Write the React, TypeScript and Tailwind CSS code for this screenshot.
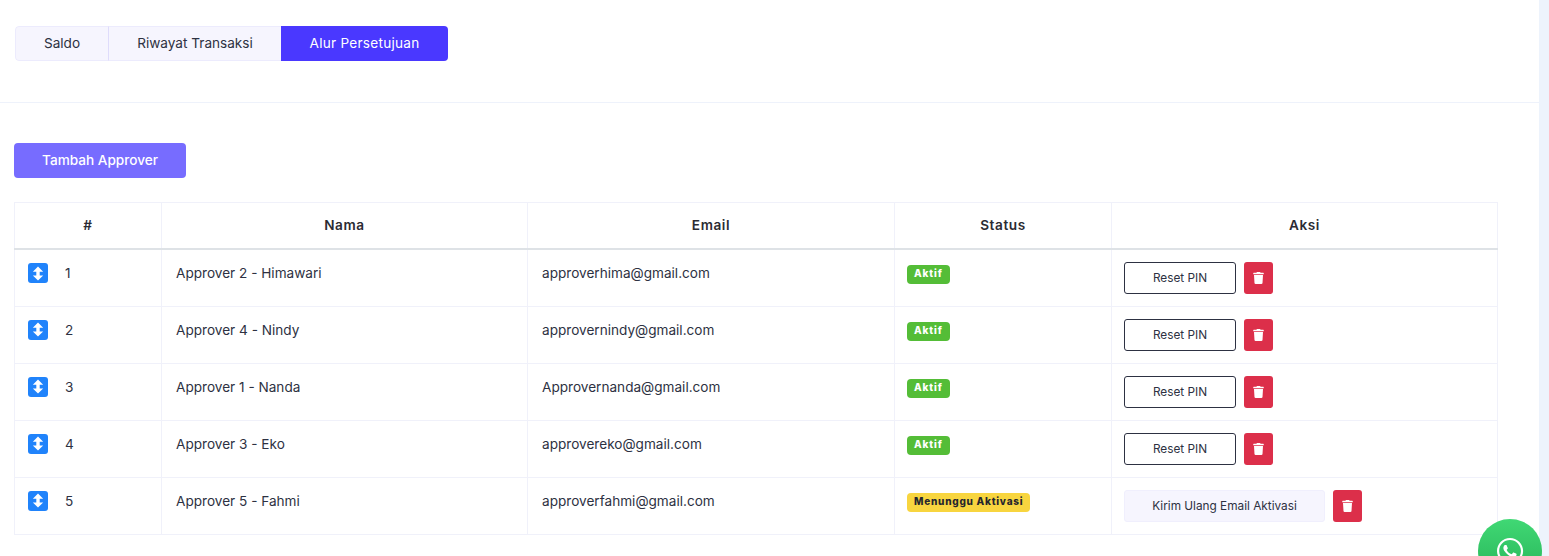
import React from "react"
import { FaWhatsapp, FaTrash } from "react-icons/fa"

const approvers = [
  { no: 1, nama: "Approver 2 - Himawari", email: "approverhima@gmail.com", aktif: true },
  { no: 2, nama: "Approver 4 - Nindy", email: "approvernindy@gmail.com", aktif: true },
  { no: 3, nama: "Approver 1 - Nanda", email: "Approvernanda@gmail.com", aktif: true },
  { no: 4, nama: "Approver 3 - Eko", email: "approvereko@gmail.com", aktif: true },
  { no: 5, nama: "Approver 5 - Fahmi", email: "approverfahmi@gmail.com", aktif: false },
]

const SortHandle = () => (
  <span className="flex h-[20px] w-[20px] items-center justify-center rounded-[3px] bg-[#2083fb]">
    <svg viewBox="0 0 12 16" className="h-[15px] w-[12px]" fill="#fff">
      <path d="M6 0.5 11.5 6H7.8V10H11.5L6 15.5 0.5 10H4.2V6H0.5Z" />
    </svg>
  </span>
)

const DeleteButton = () => (
  <button className="flex h-[32px] w-[29px] items-center justify-center rounded-[3px] bg-[#dc2f4a] text-white">
    <FaTrash className="h-[12px] w-[11px]" />
  </button>
)

export default function App() {
  return (
    <div className="flex h-[556px] w-[1549px] overflow-hidden bg-white font-['Inter',sans-serif] text-[13.6px] text-[#2d3142]">
      <div className="relative w-[1539px] shrink-0">
        <div className="h-[103px] border-b border-[#eef2fb] pl-[15px] pt-[26px]">
          <div className="flex h-[35px] w-fit overflow-hidden rounded-[4px]">
            <button className="w-[93px] rounded-l-[4px] border border-r-0 border-[#ecebfd] bg-[#f6f5fe]">Saldo</button>
            <button className="w-[173px] border border-l-[#dfdcfb] border-r-0 border-y-[#ecebfd] bg-[#f6f5fe]">Riwayat Transaksi</button>
            <button className="w-[167px] bg-[#4a38ff] tracking-[0.25px] text-white">Alur Persetujuan</button>
          </div>
        </div>

        <div className="pl-[14px] pt-[40px]">
          <button className="h-[35px] w-[172px] rounded-[4px] bg-[#776cff] font-medium text-white">Tambah Approver</button>

          <table className="mt-[24px] w-[1484px] table-fixed border-collapse">
            <thead>
              <tr className="h-[46px] border-b-2 border-[#dee2e6] tracking-[0.6px] text-[#2b2b33]">
                <th className="w-[147px] border border-b-0 border-[#f0f1fa] pb-[1px] font-semibold">#</th>
                <th className="w-[366px] border border-b-0 border-[#f0f1fa] pb-[1px] font-semibold">Nama</th>
                <th className="w-[367px] border border-b-0 border-[#f0f1fa] pb-[1px] font-semibold">Email</th>
                <th className="w-[217px] border border-b-0 border-[#f0f1fa] pb-[1px] font-semibold">Status</th>
                <th className="border border-b-0 border-[#f0f1fa] pb-[1px] font-semibold">Aksi</th>
              </tr>
            </thead>
            <tbody>
              {approvers.map((a) => (
                <tr key={a.no} className="h-[57px] first:h-[58px] [&:first-child>td]:pt-[1px]">
                  <td className="border border-[#f0f1fa] pl-[13px] pb-[10px] align-middle">
                    <div className="flex items-center gap-[17px]">
                      <SortHandle />
                      <span>{a.no}</span>
                    </div>
                  </td>
                  <td className="border border-[#f0f1fa] pl-[14px] pb-[10px]">{a.nama}</td>
                  <td className="border border-[#f0f1fa] pl-[14px] pb-[10px]">{a.email}</td>
                  <td className="border border-[#f0f1fa] pl-[12px] pb-[11px]">
                    {a.aktif ? (
                      <span className="inline-block h-[19px] rounded-[4px] bg-[#54bd37] px-[7px] text-[10px] font-extrabold leading-[17px] tracking-[0.85px] text-white">Aktif</span>
                    ) : (
                      <span className="inline-block h-[19px] rounded-[4px] bg-[#f8d53f] px-[7px] text-[10px] font-extrabold leading-[17px] tracking-[0.75px] text-[#26262e]">Menunggu Aktivasi</span>
                    )}
                  </td>
                  <td className="border border-[#f0f1fa] pl-[12px]">
                    <div className="flex items-center gap-[8px]">
                      {a.aktif ? (
                        <button className="h-[32px] w-[112px] rounded-[3px] border border-[#2d3142] pt-[1px] text-[11.8px]">Reset PIN</button>
                      ) : (
                        <button className="h-[32px] w-[201px] rounded-[3px] border border-[#f0effd] bg-[#f6f5fe] pt-[1px] text-[11.8px]">Kirim Ulang Email Aktivasi</button>
                      )}
                      <DeleteButton />
                    </div>
                  </td>
                </tr>
              ))}
            </tbody>
          </table>
        </div>

        <div className="absolute left-[1478px] top-[519px] flex h-[64px] w-[64px] items-start justify-center rounded-full bg-gradient-to-b from-[#40d874] to-[#25b257] pt-[17px] text-white">
          <FaWhatsapp className="h-[30px] w-[30px]" />
        </div>
      </div>
      <div className="flex-1 bg-[#edf3fc]" />
    </div>
  )
}
